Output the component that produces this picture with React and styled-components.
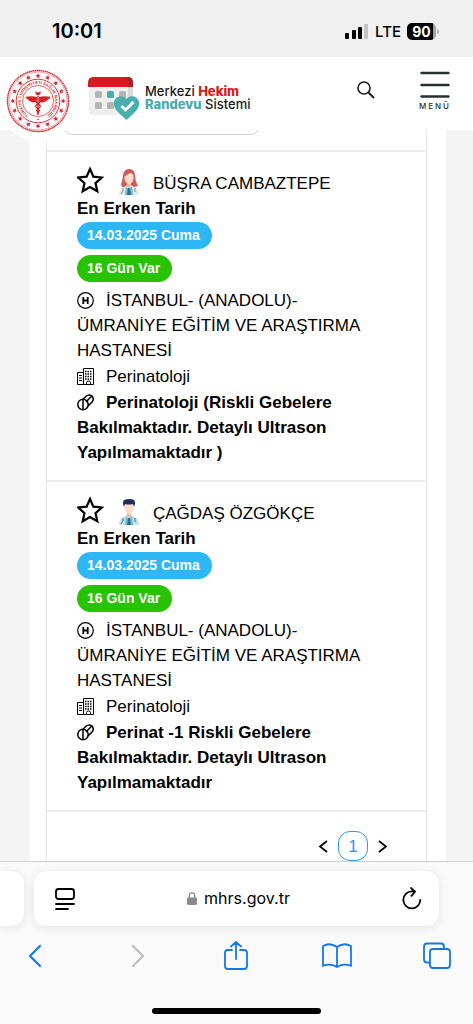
import React from "react";
import styled, { createGlobalStyle } from "styled-components";

const GlobalStyle = createGlobalStyle`
  * {
    box-sizing: border-box;
  }

  body {
    margin: 0;
    background: #f4f4f4;
    color: #000;
    font-family: "Liberation Sans", Arial, sans-serif;
    font-size: 17px;
    line-height: 25px;
  }

  button {
    padding: 0;
    border: 0;
    background: none;
    color: inherit;
    font: inherit;
    cursor: pointer;
  }

  svg {
    display: block;
    flex: none;
  }
`;

const Screen = styled.div`
  display: flex;
  flex-direction: column;
  min-height: 100vh;
`;

const StatusBar = styled.div`
  display: flex;
  align-items: center;
  justify-content: space-between;
  height: 57px;
  padding: 6px 34px 0 52px;
  background: #f0f0f0;
  font-family: Inter, sans-serif;
`;

const Clock = styled.time`
  font-size: 20px;
  font-weight: 600;
`;

const StatusIcons = styled.div`
  display: flex;
  align-items: center;
  gap: 6px;
  font-size: 15px;
  font-weight: 500;
`;

const Battery = styled.div`
  display: flex;
  align-items: center;
  gap: 1px;
`;

const BatteryLevel = styled.span`
  width: 29px;
  height: 17px;
  border-radius: 5px;
  background: linear-gradient(to right, #000 90%, #a3a3a3 90%);
  color: #fff;
  font-size: 14px;
  font-weight: 700;
  line-height: 17px;
  text-align: center;
`;

const BatteryTip = styled.span`
  width: 2px;
  height: 5px;
  border-radius: 0 2px 2px 0;
  background: #b5b5b5;
`;

const Header = styled.header`
  display: flex;
  align-items: flex-start;
  height: 73px;
  padding-right: 22px;
  background: #fff;
`;

const SealLink = styled.a`
  position: relative;
  z-index: 1;
  flex: none;
  margin: 4px 0 0 -2px;
  border-radius: 50%;
  background: #fff;
`;

const BrandLink = styled.a`
  display: flex;
  gap: 5px;
  margin: 20px auto 0 10px;
  color: #1a1a1a;
  text-decoration: none;
`;

const BrandText = styled.span`
  display: flex;
  flex-direction: column;
  padding-top: 8px;
  font-family: Inter, sans-serif;
  font-size: 13px;
  font-weight: 500;
  line-height: 13px;
  white-space: nowrap;
`;

const BrandWord = styled.b`
  color: ${(props) => props.$color};
  font-weight: 800;
`;

const SearchButton = styled.button`
  margin: 23px 43px 0 0;
`;

const MenuButton = styled.button`
  display: flex;
  flex-direction: column;
  align-items: center;
  gap: 3px;
  margin-top: 14px;
  color: #22302f;
  font-family: Inter, sans-serif;
  font-size: 8px;
  font-weight: 500;
  letter-spacing: 2px;
  line-height: 8px;
`;

const Main = styled.main`
  flex: 1;
  margin: 0 27px 0 30px;
  padding: 0 19px 0 16px;
  background: #fff;
`;

const Results = styled.section`
  height: 100%;
  border: solid #e6e6e6;
  border-width: 0 1px;
`;

const FilterEdge = styled.div`
  display: flex;
  align-items: flex-end;
  height: 22px;
  padding: 0 164px 15px 14px;
  border-bottom: 2px solid #ebebeb;
  overflow: hidden;
`;

const FilterBox = styled.div`
  flex: 1;
  height: 36px;
  border: 1px solid #d0d0d0;
  border-radius: 12px;
`;

const DoctorList = styled.ul`
  margin: 0;
  padding: 0;
  list-style: none;
`;

const DoctorItem = styled.li`
  padding: 14px 45px 15px 30px;
  border-bottom: 2px solid #ebebeb;
`;

const DoctorHead = styled.div`
  display: flex;
  align-items: flex-end;
  height: 30px;
`;

const StarButton = styled.button`
  margin: 0 13px 2px 0;
`;

const DoctorName = styled.h2`
  margin: 0 0 0 13px;
  font-size: 17px;
  font-weight: 400;
`;

const DateLabel = styled.div`
  font-weight: 700;
`;

const Badges = styled.div`
  display: flex;
  flex-direction: column;
  align-items: flex-start;
  gap: 6px;
  margin: 1px 0 6px;
`;

const Badge = styled.span`
  padding: 0 12px 0 10px;
  border-radius: 14px;
  background: ${(props) => props.$color};
  color: #fff;
  font-size: 14px;
  font-weight: 700;
  line-height: 27px;
`;

const Detail = styled.p`
  margin: 0 0 1px;
  font-weight: ${(props) => (props.$bold ? 700 : 400)};

  &:last-child {
    margin-bottom: 0;
  }

  svg {
    display: inline-block;
    margin-right: 12px;
    vertical-align: -3px;
  }
`;

const Pager = styled.nav`
  display: flex;
  align-items: center;
  justify-content: flex-end;
  gap: 9px;
  padding: 19px 37px 0 0;
`;

const PageButton = styled.button`
  width: 30px;
  height: 30px;
  border: 1px solid #2e96ee;
  border-radius: 12px;
  color: #2e96ee;
`;

const BrowserBar = styled.footer`
  height: 163px;
  border-top: 1px solid #cfcfcf;
  background: #fafafa;
`;

const AddressRow = styled.div`
  display: flex;
  gap: 10px;
  padding: 9px 34px 0 0;
`;

const PreviousTab = styled.div`
  width: 24px;
  border-radius: 0 13px 13px 0;
  background: #fff;
  box-shadow: 0 2px 12px rgba(0, 0, 0, 0.09);
`;

const AddressBar = styled.div`
  display: flex;
  flex: 1;
  align-items: center;
  justify-content: space-between;
  height: 55px;
  padding: 0 17px 0 21px;
  border-radius: 13px;
  background: #fff;
  box-shadow: 0 2px 12px rgba(0, 0, 0, 0.09);
`;

const Address = styled.button`
  display: flex;
  align-items: center;
  gap: 7px;
  font-family: Inter, sans-serif;
  font-size: 16px;
`;

const Toolbar = styled.nav`
  display: flex;
  align-items: center;
  justify-content: space-between;
  height: 60px;
  padding: 0 21px 0 20px;
`;

const HomeIndicator = styled.div`
  width: 169px;
  height: 6px;
  margin: 22px auto 0;
  border-radius: 3px;
  background: #000;
`;

const doctors = [
  {
    name: "BÜŞRA CAMBAZTEPE",
    female: true,
    date: "14.03.2025 Cuma",
    days: "16 Gün Var",
    hospital: "İSTANBUL- (ANADOLU)- ÜMRANİYE EĞİTİM VE ARAŞTIRMA HASTANESİ",
    clinic: "Perinatoloji",
    room: "Perinatoloji (Riskli Gebelere Bakılmaktadır. Detaylı Ultrason Yapılmamaktadır )"
  },
  {
    name: "ÇAĞDAŞ ÖZGÖKÇE",
    female: false,
    date: "14.03.2025 Cuma",
    days: "16 Gün Var",
    hospital: "İSTANBUL- (ANADOLU)- ÜMRANİYE EĞİTİM VE ARAŞTIRMA HASTANESİ",
    clinic: "Perinatoloji",
    room: "Perinat -1 Riskli Gebelere Bakılmaktadır. Detaylı Ultrason Yapılmamaktadır"
  }
];

function Seal() {
  const stars = Array.from({ length: 16 }, (_, i) => i * 22.5);
  return (
    <svg width="80" height="80" viewBox="-40 -40 80 80" fill="none" stroke="#d3222a">
      <circle r="30.5" strokeWidth="1.4" strokeDasharray="1.6 0.4" />
      <circle r="29" strokeWidth="0.4" />
      <circle r="21.8" strokeWidth="0.9" />
      <circle r="15.5" strokeWidth="0.7" />
      {stars.map((angle) => (
        <path
          key={angle}
          transform={`rotate(${angle}) translate(0 -25.3)`}
          d="M0-2.600.7-.8 2.600-.8 1.100.400 1.700 2.300 0 1.200-1.700 2.300-1.100.400-2.600-.8-.7-.8Z"
          fill="#d3222a"
          stroke="none"
        />
      ))}
      <path id="sealRing" d="M-9.500 14.100A17 17 0 1 1 9.500 14.100" stroke="none" />
      <text fill="#d3222a" stroke="none" fontFamily="Liberation Sans, sans-serif" fontSize="4" fontWeight="700">
        <textPath href="#sealRing">TÜRKİYE CUMHURİYETİ SAĞLIK BAKANLIĞI</textPath>
      </text>
      <circle cy="18.5" r="0.8" fill="#d3222a" stroke="none" />
      <path d="M-2.200-9.500A2.500 2.500 0 1 0 2.200-9.500 2.600 2.600 0 0 1-2.200-9.500Z" fill="#d3222a" strokeWidth="0.4" />
      <path
        d="M-1-4C-4-5-8-5-12.500-4.300-12-2.500-10.500-1.800-10-1.700-9.500-.300-8 .300-7.500.300-7 1.500-4 2-1.200.500ZM1-4C4-5 8-5 12.500-4.300 12-2.500 10.500-1.800 10-1.700 9.500-.300 8 .300 7.500.300 7 1.500 4 2 1.200.500Z"
        fill="#d3222a"
        stroke="none"
      />
      <path d="M0-5V14" strokeWidth="1.4" />
      <path d="M-2-3C-5 3 4 3 2 6S-3 8 0 12M2-3C5 3-4 3-2 6S3 8 0 12" strokeWidth="1.3" />
    </svg>
  );
}

function CalendarLogo() {
  return (
    <svg width="52" height="44" viewBox="0 0 52 44">
      <path d="M4 1H40Q45 1 45 6V33Q45 38 40 38H5Q1 38 1 34V8Z" fill="#efefef" />
      <path d="M40 6H45V33Q45 36 42 38H40Z" fill="#d8d8d8" />
      <path d="M5 0H40Q45 0 45 6V10H0V6Q0 0 5 0Z" fill="#d71920" />
      <path d="M38 0H40Q45 0 45 6V10H41V5Q41 2 38 0Z" fill="#9d2429" />
      <g fill="#b4b4b4">
        <rect x="7" y="14" width="7" height="7" rx="1.500" />
        <rect x="31" y="14" width="7" height="7" rx="1.500" />
        <rect x="7" y="25" width="7" height="7" rx="1.500" />
        <rect x="19" y="25" width="7" height="7" rx="1.500" />
      </g>
      <rect x="19" y="14" width="7" height="7" rx="1.500" fill="#45aeb0" />
      <path d="M38.500 22C35 17 27 19 26 25 25 32 31 36 38.500 43 46 36 52 32 51 25 50 19 42 17 38.500 22Z" fill="#49b0b0" />
      <path d="m33.500 29 4 4 8-8" fill="none" stroke="#fff" strokeWidth="3" />
    </svg>
  );
}

function Avatar({ female }) {
  return (
    <svg width="22" height="28" viewBox="0 0 22 28">
      {female && <path d="M4 19C2 16 5 12 5 7Q6 1 11 1 17 1 17 8 17 13 20 18L16 19H6Z" fill="#cf5a57" />}
      <path d="M1 27Q1 20 6 19L9 17H13L16 19Q21 20 21 27Z" fill={female ? "#dcebee" : "#c3e2e8"} />
      <path d="M8 18 11 21 14 18 15 27H7Z" fill="#75bdc8" />
      <path d="M10 20H12L13 27H9Z" fill="#27758d" />
      <path d="M9 14H13V18L11 20 9 18Z" fill="#efb9a5" />
      <path d="M6.500 7Q7 4 11 4T15.500 7V11Q15 15 11 16 7 15 6.500 11Z" fill="#fbdccd" />
      {female ? (
        <path d="M6 9Q6 4 11 3 16 3 16 9 15 5 12 5 9 7 6 9Z" fill="#cf5a57" />
      ) : (
        <path d="M6 9Q4 4 6 2 12 0 16 2 18 5 16 9L15 6Q11 7 7 6Z" fill="#1c2c5c" />
      )}
      <path d="M5 20V23L3 26M17 20V24" fill="none" stroke={female ? "#c8767a" : "#4a6480"} />
    </svg>
  );
}

function StarIcon() {
  return (
    <svg width="28" height="28" viewBox="0 0 28 28" fill="none" stroke="#000" strokeWidth="2.200">
      <path d="m13 3 3.400 7.600 8.400.9-6.300 5.600 1.800 8.200-7.300-4.200-7.300 4.200 1.800-8.200L1.200 11.500l8.400-.9Z" />
    </svg>
  );
}

function HospitalIcon() {
  return (
    <svg width="17" height="17" viewBox="0 0 17 17" fill="none" stroke="#000">
      <circle cx="8.500" cy="8.500" r="7.800" strokeWidth="1.200" />
      <path d="M6.300 5V12M10.700 5V12M6.300 8.500H10.700" strokeWidth="1.800" />
    </svg>
  );
}

function BuildingIcon() {
  return (
    <svg width="17" height="17" viewBox="0 0 17 17" fill="none" stroke="#000">
      <path d="M6.500 16.500V.500H16.500V16.500ZM6.500 4.500H.500V16.500H6.500" />
      <path d="M8 3.500H15.500M8 6H15.500M8 8.500H15.500M8 11H15.500" strokeWidth="1.300" strokeDasharray="1.500 1" />
      <path d="M2 7.500H5M2 10H5M2 12.500H5" strokeWidth="1.200" />
      <path d="M9.500 16.500V14.500Q9.500 13 11.500 13T13.500 14.500V16.500" />
    </svg>
  );
}

function PillIcon() {
  return (
    <svg width="17" height="17" viewBox="0 0 17 17" fill="none" stroke="#000" strokeWidth="1.500">
      <circle cx="6" cy="10.500" r="5.200" />
      <path d="M6 5.300V15.700M6 5.300 9 2.300Q12-.300 15 2 17.500 5 15 8L11 12M9 8 14.500 2.300" />
    </svg>
  );
}

function Doctor({ doctor }) {
  return (
    <DoctorItem>
      <DoctorHead>
        <StarButton aria-label="Favorilere ekle">
          <StarIcon />
        </StarButton>
        <Avatar female={doctor.female} />
        <DoctorName>{doctor.name}</DoctorName>
      </DoctorHead>
      <DateLabel>En Erken Tarih</DateLabel>
      <Badges>
        <Badge $color="#2db7f5">{doctor.date}</Badge>
        <Badge $color="#27c200">{doctor.days}</Badge>
      </Badges>
      <Detail>
        <HospitalIcon />
        {doctor.hospital}
      </Detail>
      <Detail>
        <BuildingIcon />
        {doctor.clinic}
      </Detail>
      <Detail $bold>
        <PillIcon />
        {doctor.room}
      </Detail>
    </DoctorItem>
  );
}

function SiteHeader() {
  return (
    <Header>
      <SealLink href="#" aria-label="Sağlık Bakanlığı">
        <Seal />
      </SealLink>
      <BrandLink href="#">
        <CalendarLogo />
        <BrandText>
          <span>
            Merkezi <BrandWord $color="#d71920">Hekim</BrandWord>
          </span>
          <span>
            <BrandWord $color="#49a9ab">Randevu</BrandWord> Sistemi
          </span>
        </BrandText>
      </BrandLink>
      <SearchButton aria-label="Ara">
        <svg width="20" height="20" viewBox="0 0 20 20" fill="none" stroke="#1c1c1c" strokeWidth="1.600">
          <circle cx="8" cy="8" r="6" />
          <path d="m12.500 12.500 5.500 5.500" strokeWidth="2" />
        </svg>
      </SearchButton>
      <MenuButton>
        <svg width="30" height="28" viewBox="0 0 30 28" stroke="#22302f" strokeWidth="2.400" strokeLinecap="round">
          <path d="M1.500 2H28.500M1.500 14H28.500M1.500 25.500H28.500" />
        </svg>
        MENÜ
      </MenuButton>
    </Header>
  );
}

function Browser() {
  return (
    <BrowserBar>
      <AddressRow>
        <PreviousTab />
        <AddressBar>
          <button aria-label="Sayfa ayarları">
            <svg width="20" height="24" viewBox="0 0 20 24" fill="none" stroke="#000" strokeWidth="1.800" strokeLinecap="round">
              <rect x="1" y="2" width="18" height="10" rx="2.500" />
              <path d="M1 17H19M1 22H13" />
            </svg>
          </button>
          <Address>
            <svg width="10" height="13" viewBox="0 0 10 13" fill="none" stroke="#8a8a8a">
              <path d="M2.300 6V3.500A2.700 2.700 0 0 1 7.700 3.500V6" strokeWidth="1.300" />
              <rect y="5.500" width="10" height="7.500" rx="1.500" fill="#8a8a8a" stroke="none" />
            </svg>
            mhrs.gov.tr
          </Address>
          <button aria-label="Yenile">
            <svg width="20" height="24" viewBox="0 0 20 24" fill="none" stroke="#000" strokeWidth="1.800" strokeLinecap="round" strokeLinejoin="round">
              <path d="M18.300 12.800A8.500 8.500 0 1 1 9.800 4.300H13M9 1 13 4.600 9.500 8.800" />
            </svg>
          </button>
        </AddressBar>
      </AddressRow>
      <Toolbar>
        <button aria-label="Geri">
          <svg width="30" height="30" viewBox="0 0 30 30" fill="none" stroke="#1477e6" strokeWidth="2.200" strokeLinecap="round" strokeLinejoin="round">
            <path d="M20 5 10 15 20 25" />
          </svg>
        </button>
        <button aria-label="İleri" disabled>
          <svg width="30" height="30" viewBox="0 0 30 30" fill="none" stroke="#bdbdbd" strokeWidth="2.200" strokeLinecap="round" strokeLinejoin="round">
            <path d="M12 5 22 15 12 25" />
          </svg>
        </button>
        <button aria-label="Paylaş">
          <svg width="30" height="30" viewBox="0 0 30 30" fill="none" stroke="#1477e6" strokeWidth="1.800" strokeLinecap="round" strokeLinejoin="round">
            <path d="M11 9H7Q4 9 4 12V25Q4 28 7 28H23Q26 28 26 25V12Q26 9 23 9H19M15 18V1M10 5.500 15 1 20 5.500" />
          </svg>
        </button>
        <button aria-label="Yer imleri">
          <svg width="30" height="30" viewBox="0 0 30 30" fill="none" stroke="#1477e6" strokeWidth="1.800" strokeLinejoin="round">
            <path d="M15 6Q8 1 1 5V25Q8 22 15 26 22 22 29 25V5Q22 1 15 6ZM15 6V26" />
          </svg>
        </button>
        <button aria-label="Sekmeler">
          <svg width="30" height="30" viewBox="0 0 30 30" fill="none" stroke="#1477e6" strokeWidth="1.800" strokeLinejoin="round">
            <rect x="8" y="8" width="20" height="19" rx="3" />
            <path d="M8 21.500H5Q2 21.500 2 18.500V5.500Q2 2.500 5 2.500H19Q22 2.500 22 5.500V8" />
          </svg>
        </button>
      </Toolbar>
      <HomeIndicator />
    </BrowserBar>
  );
}

function App() {
  return (
    <Screen>
      <GlobalStyle />
      <StatusBar>
        <Clock>10:01</Clock>
        <StatusIcons>
          <svg width="24" height="16" viewBox="0 0 24 16">
            <rect y="9" width="4" height="6" rx="1" />
            <rect x="7" y="6" width="4" height="9" rx="1" />
            <rect x="13" y="3" width="4" height="12" rx="1" />
            <rect x="19" width="4" height="15" rx="1" fill="#c4c4c4" />
          </svg>
          LTE
          <Battery>
            <BatteryLevel>90</BatteryLevel>
            <BatteryTip />
          </Battery>
        </StatusIcons>
      </StatusBar>
      <SiteHeader />
      <Main>
        <Results>
          <FilterEdge>
            <FilterBox />
          </FilterEdge>
          <DoctorList>
            {doctors.map((doctor) => (
              <Doctor key={doctor.name} doctor={doctor} />
            ))}
          </DoctorList>
          <Pager aria-label="Sayfalar">
            <button aria-label="Önceki sayfa">
              <svg width="12" height="14" viewBox="0 0 12 14" fill="none" stroke="#000" strokeWidth="1.700">
                <path d="M10 2 3 7.500 10 13" />
              </svg>
            </button>
            <PageButton aria-current="page">1</PageButton>
            <button aria-label="Sonraki sayfa">
              <svg width="12" height="14" viewBox="0 0 12 14" fill="none" stroke="#000" strokeWidth="1.700">
                <path d="M2 2 9 7.500 2 13" />
              </svg>
            </button>
          </Pager>
        </Results>
      </Main>
      <Browser />
    </Screen>
  );
}

export default App;
